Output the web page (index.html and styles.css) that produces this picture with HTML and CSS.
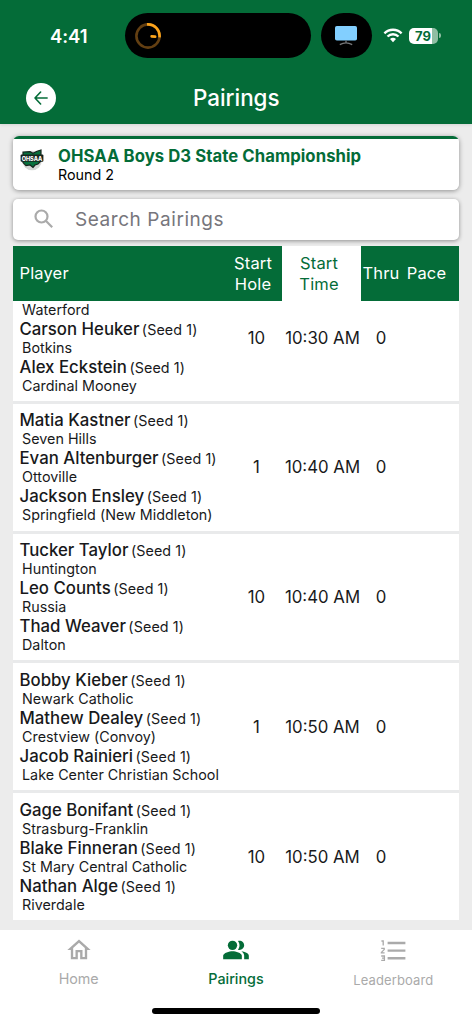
FILE: index.html
```html
<!DOCTYPE html>
<html lang="en">
<head>
<meta charset="utf-8">
<title>Pairings</title>
<link rel="stylesheet" href="styles.css">
</head>
<body>
<div class="app">
  <header class="header">
    <div class="status">
      <span class="clock">4:41</span>
      <div class="island">
        <svg width="26" height="26" viewBox="0 0 26 26" fill="none" stroke-width="2.6"><circle cx="13" cy="13" r="11.6" stroke="#633f12"/><path d="M12 1.4a11.6 11.6 0 0 1 12.5 13" stroke="#fca41c"/><path d="M16.6 13.4l3.6.2" stroke="#fca41c" stroke-linecap="round"/></svg>
      </div>
      <div class="bubble">
        <svg width="24" height="20" viewBox="0 0 24 20"><rect x="1" width="22" height="14.6" rx="1.8" fill="#82cfff"/><path d="M12 14.6v2M5.8 18.6q6.2-3.4 12.4 0" fill="none" stroke="#77787a" stroke-width="1.3"/></svg>
      </div>
      <svg class="wifi" width="20" height="15" viewBox="0 0 20 15" fill="none" stroke="#fff" stroke-width="2.4"><path d="M1.4 5.3a12.3 12.3 0 0 1 17.2 0M4.5 8.5a8 8 0 0 1 11 0"/><path d="M10 14.2l-3-3.1a4.4 4.4 0 0 1 6 0z" fill="#fff" stroke="none"/></svg>
      <div class="battery"><span>79</span></div>
      <i class="nub"></i>
    </div>
    <div class="titlebar">
      <div class="back"><svg width="14" height="14" viewBox="0 0 14 14" fill="none" stroke="#046c38" stroke-width="1.6" stroke-linecap="round" stroke-linejoin="round"><path d="M13.1 7H1M6.6 1L1 7l5.6 6"/></svg></div>
      <h1>Pairings</h1>
    </div>
  </header>

  <main class="main">
    <section class="event">
      <svg class="logo" width="24" height="22" viewBox="0 0 24 22">
        <circle cx="12" cy="11.5" r="9.8" fill="#d5d7d6"/>
        <path d="M3 3l7-.4 3 1.6 4-2 4-1.2v11l-3 3-3 1-2 2.4-3-2.4-4 .6-3-3z" fill="#08713e" stroke="#17251e" stroke-width="1.2"/>
        <rect x=".6" y="5.6" width="22.8" height="7.2" rx="1" fill="#17251e"/>
        <text x="12" y="11.6" text-anchor="middle" textLength="20.6" lengthAdjust="spacingAndGlyphs">OHSAA</text>
      </svg>
      <div><h2>OHSAA Boys D3 State Championship</h2><p>Round 2</p></div>
    </section>

    <div class="search">
      <svg width="20" height="20" viewBox="0 0 20 20" fill="none" stroke="#aaa" stroke-width="2.2"><circle cx="7.5" cy="7.5" r="6"/><path d="M11.8 11.8l6.4 6.4"/></svg>
      <span>Search Pairings</span>
    </div>

    <div class="table">
      <div class="cols thead">
        <div class="th-player">Player</div><div class="th hole">Start<br>Hole</div><div class="th sorted">Start<br>Time</div><div class="th">Thru</div><div class="th pace">Pace</div>
      </div>
      <div class="body">
        <div class="cols row first"><div class="players">
          <p class="school">Waterford</p>
          <p class="name">Carson Heuker <small>(Seed 1)</small></p><p class="school">Botkins</p>
          <p class="name">Alex Eckstein <small>(Seed 1)</small></p><p class="school">Cardinal Mooney</p>
        </div><div class="td start">10</div><div class="td time">10:30 AM</div><div class="td">0</div></div>
        <div class="cols row"><div class="players">
          <p class="name">Matia Kastner <small>(Seed 1)</small></p><p class="school">Seven Hills</p>
          <p class="name">Evan Altenburger <small>(Seed 1)</small></p><p class="school">Ottoville</p>
          <p class="name">Jackson Ensley <small>(Seed 1)</small></p><p class="school">Springfield (New Middleton)</p>
        </div><div class="td start">1</div><div class="td time">10:40 AM</div><div class="td">0</div></div>
        <div class="cols row"><div class="players">
          <p class="name">Tucker Taylor <small>(Seed 1)</small></p><p class="school">Huntington</p>
          <p class="name">Leo Counts <small>(Seed 1)</small></p><p class="school">Russia</p>
          <p class="name">Thad Weaver <small>(Seed 1)</small></p><p class="school">Dalton</p>
        </div><div class="td start">10</div><div class="td time">10:40 AM</div><div class="td">0</div></div>
        <div class="cols row"><div class="players">
          <p class="name">Bobby Kieber <small>(Seed 1)</small></p><p class="school">Newark Catholic</p>
          <p class="name">Mathew Dealey <small>(Seed 1)</small></p><p class="school">Crestview (Convoy)</p>
          <p class="name">Jacob Rainieri <small>(Seed 1)</small></p><p class="school">Lake Center Christian School</p>
        </div><div class="td start">1</div><div class="td time">10:50 AM</div><div class="td">0</div></div>
        <div class="cols row"><div class="players">
          <p class="name">Gage Bonifant <small>(Seed 1)</small></p><p class="school">Strasburg-Franklin</p>
          <p class="name">Blake Finneran <small>(Seed 1)</small></p><p class="school">St Mary Central Catholic</p>
          <p class="name">Nathan Alge <small>(Seed 1)</small></p><p class="school">Riverdale</p>
        </div><div class="td start">10</div><div class="td time">10:50 AM</div><div class="td">0</div></div>
      </div>
    </div>
  </main>

  <nav class="nav">
    <div class="tabs">
      <div class="tab">
        <svg width="28" height="28" viewBox="0 0 24 24" fill="currentColor"><path d="M12 5.69l5 4.5V18h-2v-6H9v6H7v-7.81l5-4.5M12 3L2 12h3v8h6v-6h2v6h6v-8h3L12 3z"/></svg>
        <span>Home</span>
      </div>
      <div class="tab active">
        <svg width="28" height="28" viewBox="0 0 24 24" fill="currentColor"><path d="M16.67 13.13C18.04 14.06 19 15.32 19 17v3h4v-3c0-2.18-3.57-3.47-6.33-3.87zM15 12c2.21 0 4-1.79 4-4s-1.79-4-4-4c-.47 0-.91.1-1.33.24C14.5 5.27 15 6.58 15 8s-.5 2.73-1.33 3.76c.42.14.86.24 1.33.24z"/><circle cx="9" cy="8" r="4"/><path d="M9 13c-2.67 0-8 1.34-8 4v3h16v-3c0-2.66-5.33-4-8-4z"/></svg>
        <span>Pairings</span>
      </div>
      <div class="tab board">
        <svg width="28" height="28" viewBox="0 0 28 28" fill="none" stroke="currentColor"><path d="M8.6 7h17.8M8.6 14.6h17.8M8.6 22.2h17.8" stroke-width="2.4"/><path d="M2.4 5h1.8v4.6M2.2 12.4h3v1.2l-2.8 2.8v.4h3.2M2.2 20h3.2v4.4H2.2M3 22.2h2" stroke-width="1.3"/></svg>
        <span>Leaderboard</span>
      </div>
    </div>
    <div class="homebar"></div>
  </nav>
</div>
</body>
</html>
```

FILE: styles.css
```css
* { box-sizing: border-box; }
body { margin: 0; font-family: Inter, "Liberation Sans", sans-serif; color: #18191b; }
h1, h2, p { margin: 0; }
svg { display: block; flex: none; }
.app { width: 472px; height: 1024px; display: flex; flex-direction: column; overflow: hidden; background: #ececec; }

.header { height: 124px; flex: none; background: #046c38; color: #fff; box-shadow: 0 1px 3px rgba(0,0,0,.1); }
.status { height: 58px; padding-top: 13px; display: flex; align-items: center; }
.clock { width: 125px; padding-left: 50px; font-size: 18.5px; font-weight: 600; letter-spacing: -.1px; }
.island { width: 186px; height: 45px; border-radius: 23px; background: #000; display: flex; align-items: center; padding-left: 10px; }
.bubble { width: 51px; height: 45px; margin-left: 9.5px; border-radius: 23px; background: #000; display: flex; align-items: center; justify-content: center; }
.wifi { margin-left: 11.5px; }
.battery { width: 29px; height: 16px; margin-left: 6px; border-radius: 5px; background: linear-gradient(90deg, #fff 79%, #8fbea3 79%); color: #046c38; font-size: 13px; font-weight: 700; line-height: 16px; padding-right: 1px; text-align: center; }
.nub { width: 2px; height: 5px; margin-left: 1px; border-radius: 0 2px 2px 0; background: #8fbea3; }
.titlebar { height: 66px; display: grid; grid-template-columns: 1fr auto 1fr; align-items: center; padding: 13px 25px 0 25.5px; }
.back { width: 30px; height: 30px; border-radius: 50%; background: #fff; display: flex; align-items: center; justify-content: center; }
h1 { font-size: 22.4px; font-weight: 450; }

.main { flex: 1; min-height: 0; padding: 12px 13px 0; }
.event { height: 54px; display: flex; border-radius: 6px; background: linear-gradient(#046c38 3px, #fff 3px); box-shadow: 0 1px 5px rgba(0,0,0,.4); padding: 10px 0 0 7px; }
.logo { margin-top: 3px; }
.logo text { font-size: 6px; font-weight: 800; fill: #fff; }
.event > div { margin-left: 14px; }
h2 { font-size: 16.7px; line-height: 20px; font-weight: 700; letter-spacing: .07px; color: #046c38; }
.event p { font-size: 14.3px; line-height: 18px; color: #000; }
.search { height: 41px; margin-top: 9px; display: flex; align-items: center; border-radius: 5px; background: #fff; box-shadow: 0 1px 4px rgba(0,0,0,.4); padding-left: 21px; color: #77767c; font-size: 19px; letter-spacing: .56px; }
.search span { margin: -1px 0 0 21px; }
.search svg { margin-top: -2px; }

.table { margin-top: 6px; height: 674px; display: flex; flex-direction: column; }
.cols { display: grid; grid-template-columns: 211px 58px 79px 40px 58px; align-items: center; flex: none; }
.thead { height: 55px; background: #046c38; color: #fff; font-size: 16.5px; line-height: 20.5px; letter-spacing: .15px; text-align: center; }
.th-player { text-align: left; padding-left: 6.5px; }
.sorted { background: #fff; color: #046c38; height: 55px; padding: 7px 5px 0 0; }
.pace { padding-right: 7px; }
.body { flex: none; }
.row { height: 129.8px; background: #fff; border-top: 3px solid #e9eaeb; }
.first { height: 99.8px; border-top: 0; }
.players { padding: 2px 0 0 6.5px; white-space: nowrap; }
.first .players { padding: 0 0 5px 6.5px; }
.first .td { padding-bottom: 27px; }
.name { height: 19px; line-height: 19px; font-size: 16.8px; font-weight: 480; }
.name small { font-size: 14.3px; font-weight: 400; margin-left: -2px; letter-spacing: .1px; }
.school { height: 19px; line-height: 18px; padding-left: 2.5px; font-size: 14.3px; letter-spacing: .03px; }
.td { text-align: center; font-size: 16.8px; white-space: nowrap; }
.start { padding-left: 7px; }
.time { padding-left: 2px; }

.nav { height: 94px; flex: none; background: #fff; }
.tabs { display: grid; grid-template-columns: repeat(3, 1fr); padding-top: 6px; height: 78px; }
.tab { display: flex; flex-direction: column; align-items: center; color: #aaa; font-size: 14.3px; }
.tab span { line-height: 20px; margin-top: 5px; }
.active { color: #046c38; font-weight: 450; }
.board span { font-size: 13px; margin-top: 5.5px; letter-spacing: .12px; }
.homebar { width: 168px; height: 6px; margin: 0 auto; border-radius: 3px; background: #000; }
```
